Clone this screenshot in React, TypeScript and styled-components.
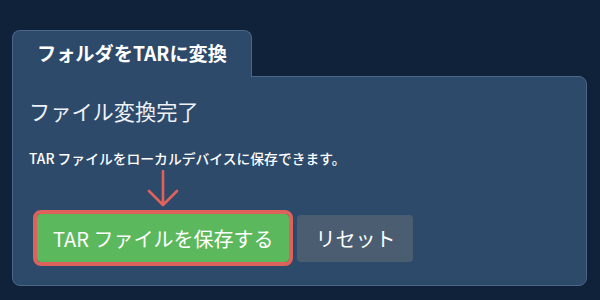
import React from "react";
import styled, { createGlobalStyle } from "styled-components";

const GlobalStyle = createGlobalStyle`
  html, body {
    margin: 0;
    padding: 0;
    background: #10223a;
  }
  body {
    font-family: "Noto Sans CJK JP", "Noto Sans", sans-serif;
    color: #ffffff;
  }
`;

const Page = styled.div`
  width: 600px;
  height: 300px;
  box-sizing: border-box;
  padding: 30px 13px 14px 12px;
  display: flex;
  flex-direction: column;
  align-items: flex-start;
`;

const Tab = styled.div`
  position: relative;
  z-index: 1;
  box-sizing: border-box;
  width: 240px;
  height: 47px;
  margin-bottom: -1px;
  display: flex;
  align-items: center;
  justify-content: center;
  padding-bottom: 2px;
  background: #2d4a6b;
  border: 1px solid #4a6688;
  border-bottom: none;
  border-radius: 8px 8px 0 0;
  font-size: 19.2px;
  font-weight: 700;
`;

const Panel = styled.section`
  box-sizing: border-box;
  align-self: stretch;
  flex: 1;
  background: #2d4a6b;
  border: 1px solid #4a6688;
  border-radius: 0 8px 8px 8px;
  padding: 20px 16px 23px 16px;
  display: flex;
  flex-direction: column;
`;

const Title = styled.h2`
  margin: 0;
  font-size: 21.2px;
  line-height: 27px;
  font-weight: 400;
  color: #eef1f5;
`;

const Description = styled.p`
  margin: 24px 0 0 0;
  font-size: 13.8px;
  line-height: 20px;
  font-weight: 500;
  color: #ffffff;
`;

const ButtonRow = styled.div`
  margin-top: 46px;
  padding-left: 8px;
  display: flex;
  align-items: center;
  gap: 8px;
`;

const ButtonHolder = styled.div`
  position: relative;
`;

const Button = styled.button<{ $variant: "primary" | "secondary" }>`
  box-sizing: border-box;
  height: ${(p) => (p.$variant === "primary" ? "48px" : "47px")};
  padding: 0 ${(p) => (p.$variant === "primary" ? "16px" : "18px")};
  border: none;
  border-radius: 4px;
  font-family: inherit;
  font-size: 20px;
  font-weight: 400;
  color: #ffffff;
  cursor: pointer;
  background: ${(p) => (p.$variant === "primary" ? "#5cb85c" : "#4b5e71")};
  outline: ${(p) => (p.$variant === "primary" ? "4px solid #dc625b" : "none")};
  white-space: nowrap;
`;

const Pointer = styled.svg`
  position: absolute;
  left: 50%;
  bottom: calc(100% + 7px);
  transform: translateX(-50%);
`;

const DownArrow = () => (
  <Pointer width="32" height="37" viewBox="0 0 32 37" fill="none">
    <path
      d="M16 1 V35 M2 21 L16 35 L30 21"
      stroke="#e0625a"
      strokeWidth="2.6"
      strokeLinecap="round"
      strokeLinejoin="round"
    />
  </Pointer>
);

export default function App() {
  return (
    <>
      <GlobalStyle />
      <Page>
        <Tab>フォルダをTARに変換</Tab>
        <Panel>
          <Title>ファイル変換完了</Title>
          <Description>TAR ファイルをローカルデバイスに保存できます。</Description>
          <ButtonRow>
            <ButtonHolder>
              <DownArrow />
              <Button $variant="primary">TAR ファイルを保存する</Button>
            </ButtonHolder>
            <Button $variant="secondary">リセット</Button>
          </ButtonRow>
        </Panel>
      </Page>
    </>
  );
}
